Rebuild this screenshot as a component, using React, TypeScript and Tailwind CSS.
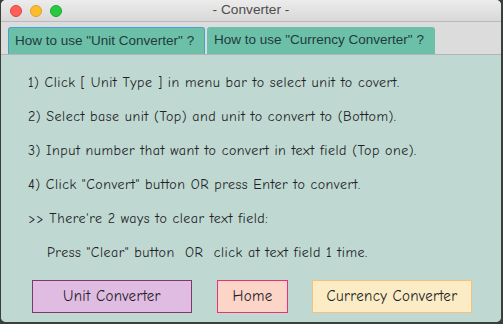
const steps = [
  '1) Click [ Unit Type ] in menu bar to select unit to covert.',
  '2) Select base unit (Top) and unit to convert to (Bottom).',
  '3) Input number that want to convert in text field (Top one).',
  '4) Click "Convert" button OR press Enter to convert.',
  ">> There're 2 ways to clear text field:",
];

const comic = { fontFamily: '"Comic Sans MS", "Comic Neue", "DejaVu Sans", sans-serif' };

export default function App() {
  return (
    <div className="h-[324px] w-[503px] bg-[#3a3f3c] pl-px">
      <div className="flex h-[322px] w-[500px] flex-col overflow-hidden rounded-[5px] bg-[#dcdcdc]">
        {/* title bar */}
        <div className="relative flex h-[22px] items-center justify-center border-b border-[#b9b9b9] bg-gradient-to-b from-[#ececec] to-[#d8d8d8]">
          <div className="absolute left-[9px] top-[5px] flex gap-[8px]">
            <span className="h-[12px] w-[12px] rounded-full border border-[#e0443e] bg-[#fe5f57]" />
            <span className="h-[12px] w-[12px] rounded-full border border-[#dea123] bg-[#febc2e]" />
            <span className="h-[12px] w-[12px] rounded-full border border-[#1aab29] bg-[#28c840]" />
          </div>
          <span className="font-['Liberation_Sans',sans-serif] text-[13.7px] text-[#4d4d4d]">- Converter -</span>
        </div>

        {/* tabs */}
        <div className="flex h-[33px] items-end gap-[2px] border-b border-[#b4b4b4] pl-[7px]">
          <div className="flex h-[27px] w-[197px] items-center rounded-t-[3px] border border-b-0 border-[#45a2d4] bg-[#6cc0a8] pl-[6px] font-['Liberation_Sans',sans-serif] text-[13.5px] text-[#233a3e]">
            How to use "Unit Converter" ?
          </div>
          <div className="flex h-[27px] w-[228px] items-center rounded-t-[3px] bg-[#6cc0a8] pl-[7px] font-['Liberation_Sans',sans-serif] text-[13.5px] text-[#233a3e]">
            How to use "Currency Converter" ?
          </div>
        </div>

        {/* content */}
        <div className="flex flex-1 flex-col bg-[#bfd9d2] pt-[11px]" style={comic}>
          <div className="pl-[27px] text-[14px] tracking-[0.5px] text-[#1f1f28]">
            {steps.map((s) => (
              <p key={s} className="h-[34px] leading-[34px] whitespace-pre">
                {s}
              </p>
            ))}
            <p className="h-[34px] pl-[19px] leading-[34px] whitespace-pre">
              Press "Clear" button  OR  click at text field 1 time.
            </p>
          </div>

          <div className="mt-[10px] flex pl-[31px] text-[15px] tracking-[0.3px] text-[#1f1f28]">
            <button className="h-[33px] w-[160px] border border-[#7a3b6c] bg-[#e0bce2]">Unit Converter</button>
            <button className="ml-[25px] h-[33px] w-[71px] border border-[#e8327a] bg-[#fdd5c8]">Home</button>
            <button className="ml-[24px] h-[33px] w-[160px] border border-[#f5c27d] bg-[#fbecc5]">Currency Converter</button>
          </div>
        </div>
      </div>
    </div>
  );
}
